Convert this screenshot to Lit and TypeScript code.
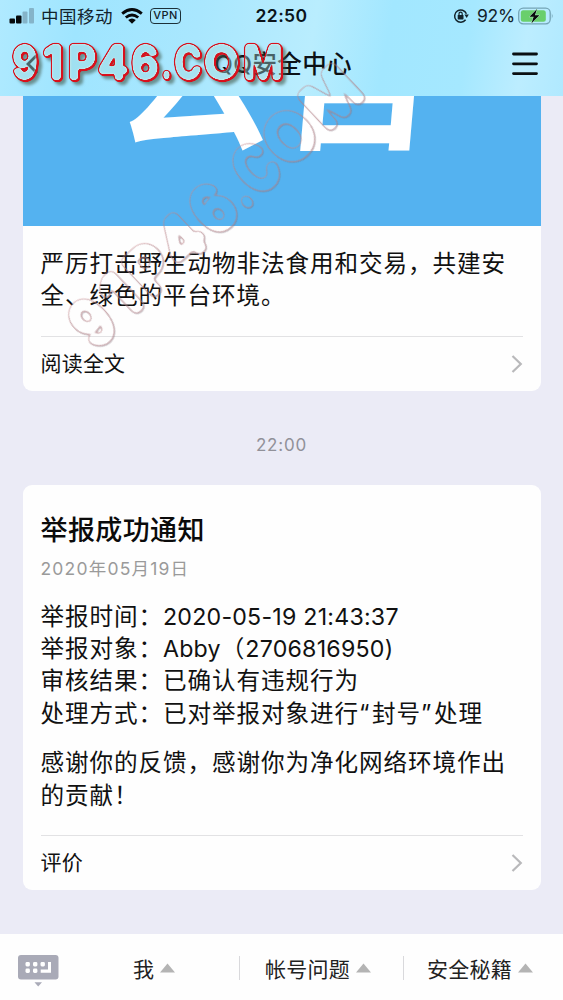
import { LitElement, html, svg, css } from "lit";
import { customElement, property } from "lit/decorators.js";

const MARK: [string, number, number][] = [
  ["9", 25, 25], ["1", 53, 20], ["P", 82, 28], ["4", 113, 30], ["6", 145, 27],
  [".", 166.5, 9], ["C", 188, 27], ["O", 221.5, 35], ["M", 263, 39],
];

const chevron = html`<svg width="12" height="20" viewBox="0 0 12 20" fill="none" stroke="#b9b9bb" stroke-width="2.2">
  <path d="M1.5 2 L9.8 10 L1.5 18" /></svg>`;

@customElement("status-bar")
class StatusBar extends LitElement {
  static styles = css`
    :host { display: block; height: 31px; }
    .bar { display: grid; grid-template-columns: 1fr auto 1fr; align-items: center; height: 31px; padding: 0 9px 0 9px; color: #12222b; }
    .side { display: flex; align-items: center; }
    .end { justify-content: flex-end; }
    .carrier { font-size: 17.5px; letter-spacing: 0.5px; margin: 0 8px 0 7px; }
    .time { font-size: 17.5px; font-weight: 600; letter-spacing: 0.4px; color: #0b151b; }
    .pct { font-size: 17.5px; margin: 0 3px 0 8px; letter-spacing: -0.2px; }
    .vpn { box-sizing: border-box; border: 1.5px solid #1c3038; border-radius: 4px; height: 16px; width: 31px; margin-left: 7px;
      font-size: 11px; line-height: 13.5px; letter-spacing: 0.5px; text-align: center; font-weight: 500; }
    svg { display: block; flex: none; }
  `;
  render() {
    return html`<div class="bar">
      <div class="side">
        <svg width="25" height="16" viewBox="0 0 25 16">
          <rect x="0.5" y="10.5" width="5.5" height="5" rx="1" fill="#06090b" />
          <rect x="7" y="7.5" width="5.5" height="8" rx="1" fill="#06090b" />
          <rect x="13.5" y="3.5" width="5" height="12" rx="1" fill="#85b4c9" />
          <rect x="20" y="0" width="5" height="15.5" rx="1" fill="#85b4c9" />
        </svg>
        <span class="carrier">中国移动</span>
        <svg width="22" height="16" viewBox="0 0 22 16">
          <g fill="none" stroke="#06090b" stroke-width="2.9">
            <path d="M1.2 5.6 Q11 -2.4 20.8 5.6" />
            <path d="M4.8 9.5 Q11 4.4 17.2 9.5" />
          </g>
          <path d="M7.2 12 Q11 8.8 14.8 12 L11 15.8 Z" fill="#06090b" />
        </svg>
        <span class="vpn">VPN</span>
      </div>
      <span class="time">22:50</span>
      <div class="side end">
        <svg width="16" height="16" viewBox="0 0 16 16" fill="none" stroke="#13242c" stroke-width="1.5">
          <path d="M12.6 11.8 A6.1 6.1 0 1 1 13.4 5.8" />
          <path d="M11.4 6.6 L15.8 6.6 L13.7 10 Z" fill="#13242c" stroke="none" />
          <rect x="4.7" y="7" width="5.8" height="4.4" rx="0.6" fill="#13242c" stroke="none" />
          <path d="M6 7.2 V5.8 a1.6 1.6 0 0 1 3.2 0 V7.2" stroke-width="1.2" />
        </svg>
        <span class="pct">92%</span>
        <svg class="batt" width="36" height="18" viewBox="0 0 36 18">
          <rect x="0.7" y="1.2" width="31.5" height="15.6" rx="4.5" fill="none" stroke="#74a4b6" stroke-width="1.3" />
          <rect x="2.8" y="3.2" width="25" height="11.6" rx="2.5" fill="#69cf6c" />
          <path d="M33.8 6.3 q1.8 2.7 0 5.4 z" fill="#74a4b6" />
          <path d="M19 2 L11.5 9.8 H15.7 L13.5 16.2 L21.4 8.2 H16.9 Z" fill="#0a0d0c" stroke="#b9efce" stroke-width="1" paint-order="stroke" />
        </svg>
      </div>
    </div>`;
  }
}

@customElement("title-bar")
class TitleBar extends LitElement {
  static styles = css`
    :host { display: block; }
    .bar { display: grid; grid-template-columns: 1fr auto 1fr; align-items: center; height: 65px; padding: 0 25px 0 25px; }
    .title { font-size: 24.5px; font-weight: 500; color: #0c1116; letter-spacing: 0.35px; line-height: 30px; margin-left: 3px; }
    svg { display: block; }
    .menu { justify-self: end; }
  `;
  render() {
    return html`<div class="bar">
      <svg width="14" height="22" viewBox="0 0 14 22" fill="none" stroke="#10181c" stroke-width="2.8"><path d="M12 2 L3 11 L12 20" /></svg>
      <span class="title">QQ安全中心</span>
      <svg class="menu" width="26" height="24" viewBox="0 0 26 24" stroke="#0a0f12" stroke-width="2.8" stroke-linecap="round">
        <path d="M1.5 2 H24.5 M1.5 11.8 H24.5 M1.5 21.6 H24.5" />
      </svg>
    </div>`;
  }
}

@customElement("card-link")
class CardLink extends LitElement {
  @property() label = "";
  static styles = css`
    :host { display: block; margin: 0 18px; }
    .row { display: flex; align-items: center; justify-content: space-between; height: 54px; border-top: 1px solid #e2e2e4;
      font-size: 21px; letter-spacing: 0.2px; color: #111; }
    .label { padding-bottom: 4px; }
    svg { display: block; }
  `;
  render() {
    return html`<div class="row"><span class="label">${this.label}</span>${chevron}</div>`;
  }
}

@customElement("bottom-menu")
class BottomMenu extends LitElement {
  static styles = css`
    :host { display: block; flex: none; }
    .bar { display: grid; grid-template-columns: 76px 163px 164px 160px; height: 66px; align-items: center; background: #fefefe; }
    .item { box-sizing: border-box; display: flex; align-items: center; justify-content: center; gap: 6px; height: 24px; margin-top: 2px;
      padding-right: 7px; font-size: 21px; letter-spacing: 0.2px; color: #222; white-space: nowrap; }
    .split { border-left: 1px solid #d9d9dc; }
    .key { margin: 7px 0 0 18px; display: block; }
    .tri { display: block; flex: none; }
  `;
  render() {
    const items = ["我", "帐号问题", "安全秘籍"];
    return html`<div class="bar">
      <svg class="key" width="41" height="32" viewBox="0 0 41 32">
        <rect x="0" y="0" width="40.5" height="24.5" rx="3" fill="#a9aab7" />
        <g fill="#fff">
          <rect x="7.5" y="7" width="4.4" height="4.4" rx="1.4" /><rect x="15" y="7" width="4.4" height="4.4" rx="1.4" /><rect x="22.5" y="7" width="4.4" height="4.4" rx="1.4" />
          <rect x="7.5" y="13.6" width="4.4" height="4.4" rx="1.4" /><rect x="15" y="13.6" width="4.4" height="4.4" rx="1.4" />
          <path d="M30 7 H33 V17.8 H22.7 V14.6 H30 Z" />
        </g>
        <path d="M16.5 27.2 H24 L20.2 31.4 Z" fill="#a9aab7" />
      </svg>
      ${items.map((t, i) => html`<div class="item ${i ? "split" : ""}"><span>${t}</span>
        <svg class="tri" width="15" height="10" viewBox="0 0 15 10"><path d="M0 9.5 L7.5 0.5 L15 9.5 Z" fill="#b4b4b4" /></svg></div>`)}
    </div>`;
  }
}

@customElement("app-root")
class AppRoot extends LitElement {
  static styles = css`
    :host { display: block; position: relative; width: 563px; height: 1000px; overflow: hidden;
      font-family: Inter, "Noto Sans CJK SC", sans-serif; background: #ebebf6; color: #111; }
    .page { display: flex; flex-direction: column; height: 1000px; }
    .head { flex: none; height: 96px;
      background: linear-gradient(100deg, #b0eaff 0%, #9fe5ff 14%, #a9e7fe 35%, #b9edfe 55%, #a2e7ff 68%, #a5e8ff 82%, #bcedff 92%, #b0e9ff 100%); }
    .chat { flex: 1; padding: 0 22.5px; display: flex; flex-direction: column; }
    .card { background: #fefefe; border-radius: 9px; overflow: hidden; }
    .first { border-radius: 0 0 9px 9px; height: 295px; }
    .second { height: 405.5px; }
    .banner { display: block; background: #54b2f0; }
    .big { font-size: 162px; font-weight: 700; fill: #fff; }
    .body { font-size: 23.6px; line-height: 32.4px; letter-spacing: 0.9px; margin: 0 0 0 18px; white-space: nowrap; }
    .lead { padding: 22px 0 23.5px; }
    .stamp { font-size: 17px; letter-spacing: 0.8px; line-height: 24px; color: #919199; text-align: center; margin: 41.5px 0 28px; }
    .title { font-size: 27px; line-height: 36px; font-weight: 500; letter-spacing: 0.4px; margin: 28px 18px 0; color: #0b0b0b; }
    .date { font-size: 17.5px; line-height: 24px; letter-spacing: 1.2px; color: #9a9a9a; margin: 8px 18px 0; }
    .facts { padding-top: 20px; }
    .num { font-size: 23.2px; letter-spacing: 0.22px; }
    .quote { letter-spacing: 2.6px; }
    .thanks { padding: 17px 0 23px; }
    .marks { position: absolute; left: 0; top: 0; pointer-events: none; }
    .glyph { font-size: 47px; font-weight: 700; }
  `;
  render() {
    const letters = MARK.map(([c, x, w]) => svg`<text class="glyph" x=${x - w / 2} y="79"
      textLength=${w} lengthAdjust="spacingAndGlyphs">${c}</text>`);
    return html`
      <div class="page">
        <header class="head"><status-bar></status-bar><title-bar></title-bar></header>
        <main class="chat">
          <section class="card first">
            <svg class="banner" width="518" height="129.5" viewBox="0 0 518 129.5">
              <text class="big" x="91" y="40" transform="translate(1 0) skewX(-5)">公告</text>
            </svg>
            <div class="body lead">严厉打击野生动物非法食用和交易，共建安<br />全、绿色的平台环境。</div>
            <card-link label="阅读全文"></card-link>
          </section>
          <div class="stamp">22:00</div>
          <section class="card second">
            <div class="title">举报成功通知</div>
            <div class="date">2020年05月19日</div>
            <div class="body facts">举报时间：<span class="num">2020-05-19 21:43:37</span><br />举报对象：<span class="num">Abby</span>（<span class="num">2706816950)</span><br />审核结果：已确认有违规行为<br />处理方式：已对举报对象进行<span class="quote">“</span>封号<span class="quote">”</span>处理</div>
            <div class="body thanks">感谢你的反馈，感谢你为净化网络环境作出<br />的贡献！</div>
            <card-link label="评价"></card-link>
          </section>
        </main>
        <bottom-menu></bottom-menu>
      </div>
      <svg class="marks" width="563" height="400" viewBox="0 0 563 400">
        <defs>
          <filter id="bold" x="-5%" y="-30%" width="110%" height="160%" color-interpolation-filters="sRGB">
            <feGaussianBlur in="SourceAlpha" stdDeviation="1.8" result="in1" />
            <feComponentTransfer in="in1" result="inner"><feFuncA type="linear" slope="9" intercept="-1.9" /></feComponentTransfer>
            <feGaussianBlur in="inner" stdDeviation="0.8" result="o1" />
            <feComponentTransfer in="o1" result="outer"><feFuncA type="linear" slope="6" intercept="-0.4" /></feComponentTransfer>
            <feOffset in="outer" dx="1" dy="1" result="low" />
            <feMerge result="full"><feMergeNode in="outer" /><feMergeNode in="low" /></feMerge>
            <feComposite in="full" in2="inner" operator="out" result="ring" />
            <feFlood flood-color="#d9101c" result="red" />
            <feComposite in="red" in2="ring" operator="in" result="edge" />
            <feGaussianBlur in="ring" stdDeviation="1.3" result="g0" />
            <feFlood flood-color="#f6efdc" flood-opacity="0.95" result="cream" />
            <feComposite in="cream" in2="g0" operator="in" result="g1" />
            <feComposite in="g1" in2="inner" operator="in" result="bevel" />
            <feOffset in="full" dx="2.5" dy="2.5" result="s0" />
            <feGaussianBlur in="s0" stdDeviation="1.5" result="s1" />
            <feFlood flood-color="#41594a" flood-opacity="0.6" result="dark" />
            <feComposite in="dark" in2="s1" operator="in" result="s2" />
            <feComposite in="s2" in2="inner" operator="out" result="shadow" />
            <feFlood flood-color="#a3d9dc" flood-opacity="0.4" result="tint" />
            <feComposite in="tint" in2="inner" operator="in" result="body" />
            <feMerge><feMergeNode in="shadow" /><feMergeNode in="body" /><feMergeNode in="bevel" /><feMergeNode in="edge" /></feMerge>
          </filter>
          <filter id="faint" x="-5%" y="-30%" width="110%" height="160%" color-interpolation-filters="sRGB">
            <feGaussianBlur in="SourceAlpha" stdDeviation="1.8" result="in1" />
            <feComponentTransfer in="in1" result="inner"><feFuncA type="linear" slope="9" intercept="-1.9" /></feComponentTransfer>
            <feGaussianBlur in="inner" stdDeviation="0.6" result="o1" />
            <feComponentTransfer in="o1" result="outer"><feFuncA type="linear" slope="6" intercept="-0.4" /></feComponentTransfer>
            <feComposite in="outer" in2="inner" operator="out" result="ring" />
            <feFlood flood-color="#d08c90" flood-opacity="0.42" result="pink" />
            <feComposite in="pink" in2="ring" operator="in" result="edge" />
            <feOffset in="outer" dx="0.3" dy="1" result="low" />
            <feComposite in="low" in2="inner" operator="out" result="side" />
            <feFlood flood-color="#7c6f7c" flood-opacity="0.38" result="grey" />
            <feComposite in="grey" in2="side" operator="in" result="shade" />
            <feMerge><feMergeNode in="shade" /><feMergeNode in="edge" /></feMerge>
          </filter>
        </defs>
        <g transform="translate(93 323) rotate(-43.3) scale(1.38) translate(-25 -63)"><g filter="url(#faint)">${letters}</g></g>
        <g filter="url(#bold)">${letters}</g>
      </svg>`;
  }
}
